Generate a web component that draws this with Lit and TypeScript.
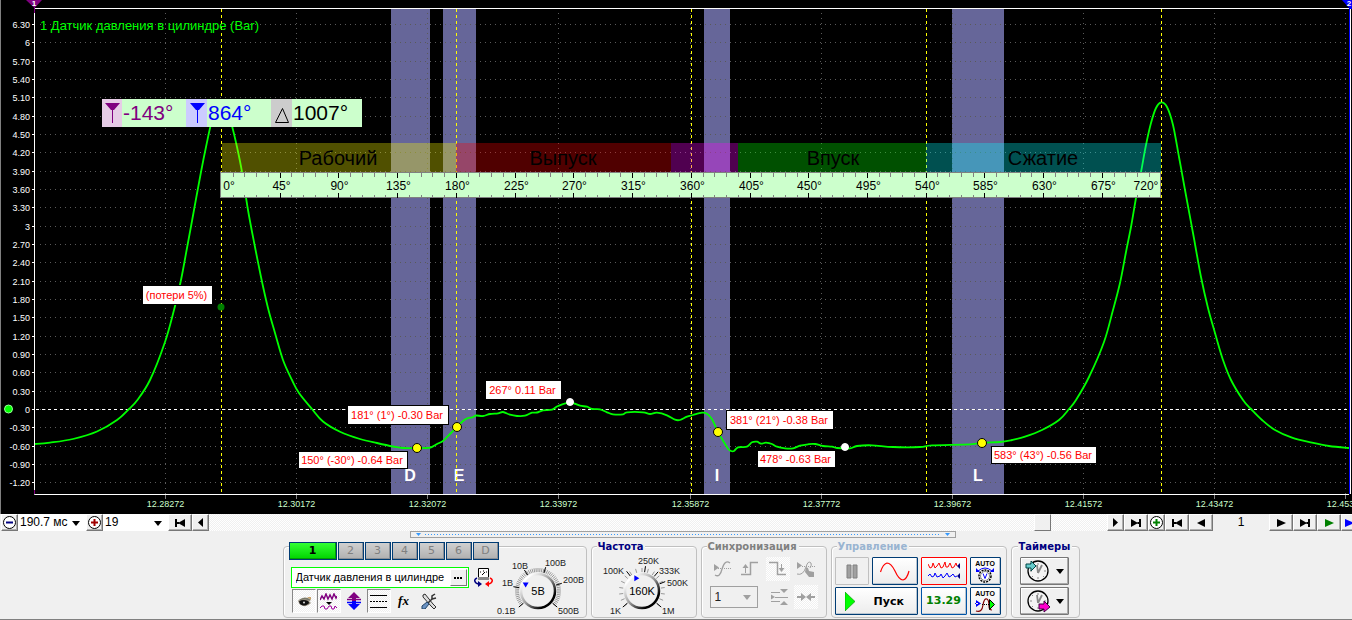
import { LitElement, html, svg, css } from "lit";
import { customElement, property, state } from "lit/decorators.js";
import { classMap } from "lit/directives/class-map.js";

type Pt = [number, number];

/* ---------- chart scales ---------- */
const ZERO_Y = 409;
const PX_PER_BAR = 61.1;
const DEG0_X = 221.5;
const PX_PER_DEG = 1.305;
const yOf = (bar: number) => Math.round(ZERO_Y - bar * PX_PER_BAR) + 0.5;
const xOf = (deg: number) => Math.round(DEG0_X + deg * PX_PER_DEG - 0.5) + 0.5;

const CURVE: Pt[] = [
  [35, 444], [50, 442.6], [73, 439], [97, 431.5], [117, 420], [129, 409], [137, 400.5], [150, 380],
  [165, 342], [174, 310], [181, 280], [187, 248], [194, 210], [201, 172], [206, 147],
  [211, 124], [216, 108], [221, 102.5], [226, 108], [232, 126], [237, 147], [242, 172], [248, 210], [254, 242],
  [261, 277], [268, 308], [275, 333], [283, 360], [292, 380], [299, 393], [312, 409], [323, 421.5],
  [340, 431.7], [360, 439], [377, 443], [393, 446.5], [403, 448], [417, 448], [427, 448], [431, 447.3], [437, 444],
  [443, 441], [450, 434], [457, 427], [463, 421], [468, 418], [472, 417.5], [476, 415.5], [483, 416],
  [490, 414], [498, 413.3], [503, 412], [510, 414.7], [517, 416], [525, 415.7], [532, 412.7],
  [537, 412.5], [543, 410.3], [552, 409.7], [558, 406], [570, 402.5], [580, 405.7], [587, 406.7],
  [592, 409], [600, 409.3], [607, 412.3], [613, 414.3], [623, 414.3], [627, 412.3], [643, 412.3],
  [650, 414], [657, 412.7], [667, 415.3], [675, 419.7], [680, 420], [687, 416.7], [693, 415],
  [702, 412.7], [707, 413.7], [712, 419.3], [718, 431.7], [723, 440.7], [728, 448.7], [731, 451],
  [734, 451], [738, 447.3], [747, 446.7], [752, 442.3], [757, 441.7], [761, 443.7], [766, 442.7],
  [772, 444], [777, 446.7], [785, 448.3], [793, 448.3], [800, 445.7], [808, 444.3], [815, 444],
  [823, 446], [832, 446.7], [837, 448], [850, 448.3], [857, 446], [872, 445.3], [893, 447],
  [920, 447], [932, 445.3], [970, 444.3], [982, 442.7], [1000, 442], [1012, 440], [1025, 436.7],
  [1042, 430], [1059, 420], [1069, 409], [1076, 400], [1089, 377], [1104, 342], [1113, 310],
  [1120, 283], [1126, 252], [1131, 227], [1136, 198], [1141, 172], [1146, 145], [1151, 123],
  [1156, 108], [1161, 102.5], [1167, 107], [1173, 125], [1179, 157], [1185, 190], [1193, 233],
  [1201, 277], [1208, 308], [1215, 333], [1223, 360], [1231, 380], [1243, 400], [1251, 409],
  [1262, 420], [1275, 430], [1292, 437.7], [1312, 442.7], [1329, 446], [1349, 448],
];

/* Smooth path through the samples (Catmull-Rom to Bezier). */
function smooth(p: Pt[]): string {
  let d = `M${p[0][0]} ${p[0][1]}`;
  for (let i = 0; i < p.length - 1; i++) {
    const a = p[Math.max(0, i - 1)], b = p[i], c = p[i + 1], e = p[Math.min(p.length - 1, i + 2)];
    const f = (n: number) => n.toFixed(1);
    d += `C${f(b[0] + (c[0] - a[0]) / 6)} ${f(b[1] + (c[1] - a[1]) / 6)} ${f(c[0] - (e[0] - b[0]) / 6)} ${f(c[1] - (e[1] - b[1]) / 6)} ${c[0]} ${c[1]}`;
  }
  return d;
}

const Y_TICKS = Array.from({ length: 26 }, (_, i) => (63 - i * 3) / 10);
const yLabel = (v: number) => (Number.isInteger(v) ? String(v) : v.toFixed(2));
const X_TICKS = ["12.28272", "12.30172", "12.32072", "12.33972", "12.35872", "12.37772", "12.39672", "12.41572", "12.43472", "12.45372"]
  .map((label, i) => ({ label, x: Math.round(165.15 + i * 131.1) + 0.5 }));

const BANDS = [
  { x: 391, w: 39, name: "D", tx: 410 },
  { x: 443, w: 33, name: "E", tx: 459 },
  { x: 704, w: 26, name: "I", tx: 717 },
  { x: 952, w: 52, name: "L", tx: 978 },
];
const PHASES = [
  { x: 222, w: 234, fill: "#ff0", name: "Рабочий", tx: 338 },
  { x: 456, w: 215, fill: "#f00", name: "Выпуск", tx: 563 },
  { x: 671, w: 67, fill: "#f0f", name: "", tx: 0 },
  { x: 738, w: 188, fill: "#0f0", name: "Впуск", tx: 833 },
  { x: 926, w: 235, fill: "#0ff", name: "Сжатие", tx: 1043 },
];
const NOTES = [
  { x: 143, y: 286, w: 69, h: 18, t: "(потери 5%)" },
  { x: 348, y: 406, w: 100, h: 18, t: "181° (1°) -0.30 Bar" },
  { x: 299, y: 452, w: 108, h: 16, t: "150° (-30°) -0.64 Bar" },
  { x: 486, y: 381, w: 75, h: 18, t: "267° 0.11 Bar" },
  { x: 727, y: 411, w: 106, h: 18, t: "381° (21°) -0.38 Bar" },
  { x: 758, y: 451, w: 77, h: 16, t: "478° -0.63 Bar" },
  { x: 992, y: 447, w: 104, h: 16, t: "583° (43°) -0.56 Bar" },
];
const POINTS = [
  { x: 417, y: 448, c: "yellow" }, { x: 457, y: 427, c: "yellow" }, { x: 718, y: 432, c: "yellow" },
  { x: 982, y: 443, c: "yellow" }, { x: 570, y: 402, c: "white" }, { x: 845, y: 447, c: "white" },
];

@customElement("pressure-chart")
export class PressureChart extends LitElement {
  static styles = css`
    :host { display: block; background: #000; }
    svg { display: block; width: 100%; height: auto; font-family: "Liberation Sans", Arial, sans-serif; }
    .grid { stroke: #5a5a5a; stroke-width: 1; }
    .gh { stroke-dasharray: 1 4; }
    .gv { stroke-dasharray: 1 4; }
    .axis { fill: none; stroke: #fff; stroke-width: 1; }
    .ylab { fill: #fff; font-size: 9px; text-anchor: end; }
    .xlab { fill: #cfc; font-size: 9px; text-anchor: middle; }
    .band { fill: #669; }
    .mark { stroke: #ff0; stroke-dasharray: 3 3; }
    .zero { stroke: #fff; stroke-dasharray: 3 3; }
    .curve { fill: none; stroke: #0f0; stroke-width: 1.8; }
    .channel { fill: #0f0; font-size: 13px; }
    .phase { fill-opacity: 0.314; }
    .phase-name { font-size: 20px; text-anchor: middle; }
    .ruler { fill: #cfc; stroke: #808080; }
    .minor { stroke: #808080; }
    .major { stroke: #000; }
    .deg { font-size: 12px; text-anchor: middle; }
    .note { fill: #fff; stroke: #000; }
    .note-text { fill: #f00; font-size: 11px; text-anchor: middle; }
    .band-name { fill: #fff; font-size: 16px; font-weight: bold; text-anchor: middle; }
    .yellow { fill: #ff0; stroke: #000; }
    .white { fill: #fff; stroke: #fff; }
    .read { font-size: 21px; }
    .flag { fill: #fff; font-size: 8px; font-weight: bold; text-anchor: middle; }
  `;

  render() {
    const ruler = Array.from({ length: 79 }, (_, i) => (i + 1) * 9);
    return html`<svg viewBox="0 0 1352 514" role="img" aria-label="Датчик давления в цилиндре">
      <rect width="1352" height="514" fill="#000"></rect>
      <path d="M.5 0V514" stroke="#808080"></path>
      ${BANDS.map((b) => svg`<rect class="band" x=${b.x} y="9" width=${b.w} height="485"></rect>`)}
      ${Y_TICKS.map((v) => svg`<path class="grid gh" d="M40 ${yOf(v)}H1349"></path><path class="axis" d="M32 ${yOf(v)}h3"></path>
        <text class="ylab" x="30" y=${yOf(v) + 3}>${yLabel(v)}</text>`)}
      ${X_TICKS.map((t) => svg`<path class="grid gv" d="M${t.x} 13V494"></path><path d="M${t.x} 495v4" stroke="#808080"></path>
        <text class="xlab" x=${t.x} y="507">${t.label}</text>`)}
      <path class="zero" d="M36 ${yOf(0)}H1349"></path>
      <path class="curve" d=${smooth(CURVE)}></path>
      ${[0, 180, 360, 540, 720].map((d) => svg`<path class="mark" d="M${xOf(d)} 9V494"></path>`)}
      ${PHASES.map((p) => svg`<rect class="phase" x=${p.x} y="143" width=${p.w} height="29" fill=${p.fill}></rect>
        ${p.name ? svg`<text class="phase-name" x=${p.tx} y="165">${p.name}</text>` : ""}`)}
      <rect class="ruler" x="220.5" y="172.5" width="940" height="25"></rect>
      ${ruler.map((d) => d % 45
        ? svg`<path class="minor" d="M${xOf(d)} 173v4M${xOf(d)} 195v2"></path>`
        : svg`<path class="major" d="M${xOf(d)} 173v5M${xOf(d)} 193v5"></path>
          <text class="deg" x=${xOf(d) + 1} y="190">${d}°</text>`)}
      <text class="deg" x="229" y="190">0°</text>
      <text class="deg" x="1146" y="190">720°</text>
      <path class="axis" d="M34.5 13V494.5H1349M34 8.5H1350M1350.5 8V494"></path>
      <path d="M1349.5 8V494" stroke="#00f"></path>
      <path d="M34.5 6V13M34.5 490V494" stroke="#800080"></path>
      <path d="M26 0H42L35 7.500H34Z" fill="#800080"></path>
      <text class="flag" x="34" y="6">1</text>
      <path d="M1342 0H1352V9H1350Z" fill="#00f"></path>
      <text class="flag" x="1349" y="6">2</text>
      <text class="channel" x="40" y="30">1 Датчик давления в цилиндре (Bar)</text>

      <rect x="102" y="99" width="260" height="28" fill="#cfc"></rect>
      <rect x="102" y="99" width="20" height="28" fill="#e6cce6"></rect>
      <rect x="186" y="99" width="21" height="28" fill="#ccf"></rect>
      <rect x="271" y="99" width="21" height="28" fill="#ccc"></rect>
      <path d="M105 103h15l-6 7h-3zM112 108h1v15h-1z" fill="#800080"></path>
      <path d="M190 103h15l-6 7h-3zM197 108h1v15h-1z" fill="#00f"></path>
      <path d="M282.500 108.500L288.500 122.500H275.500Z" fill="none" stroke="#000"></path>
      <text class="read" x="123" y="120" fill="#800080">-143°</text>
      <text class="read" x="208" y="120" fill="#00f">864°</text>
      <text class="read" x="293" y="120">1007°</text>

      ${NOTES.map((n) => svg`<rect class="note" x=${n.x - 0.5} y=${n.y - 0.5} width=${n.w + 1} height=${n.h + 1}></rect>
        <text class="note-text" x=${n.x + n.w / 2 - 1} y=${n.y + n.h / 2 + 4}>${n.t}</text>`)}
      ${BANDS.map((b) => svg`<text class="band-name" x=${b.tx} y="481">${b.name}</text>`)}
      <path class="mark" d="M${xOf(180)} 465V494"></path>
      ${POINTS.map((p) => svg`<circle class=${p.c} cx=${p.x} cy=${p.y} r=${p.c === "white" ? 3.5 : 4.5}></circle>`)}
      <circle cx="221" cy="307" r="3.500" fill="#008000"></circle>
      <circle cx="8.500" cy="409" r="4" fill="#0f0" stroke="#9f9"></circle>
    </svg>`;
  }
}

/* ---------- rotary dial ---------- */
interface DialLabel { t: string; x: number; y: number; a: number }

@customElement("rotary-dial")
export class RotaryDial extends LitElement {
  @property() value = "";
  @property({ type: Number }) w = 90;
  @property({ type: Number }) cx = 42;
  @property({ type: Number }) steps = 50;
  @property({ type: Number }) pointer = 0;
  @property({ attribute: false }) labels: DialLabel[] = [];

  static styles = css`
    :host { display: block; }
    svg { display: block; font-family: "Liberation Sans", Arial, sans-serif; }
    .lab { font-size: 9px; fill: #222; }
    .val { font-size: 11px; text-anchor: middle; }
  `;

  render() {
    const cy = 38;
    const ray = (a: number, r1: number, r2: number) => {
      const r = (a * Math.PI) / 180;
      const c = Math.cos(r), s = Math.sin(r);
      return `M${(this.cx + c * r1).toFixed(1)} ${(cy + s * r1).toFixed(1)}L${(this.cx + c * r2).toFixed(1)} ${(cy + s * r2).toFixed(1)}`;
    };
    const minor = Array.from({ length: this.steps + 1 }, (_, i) => ray(-220 + (i * 260) / this.steps, 19, 23)).join("");
    const p = (this.pointer * Math.PI) / 180;
    const px = this.cx + Math.cos(p) * 14, py = cy + Math.sin(p) * 14;
    return html`<svg width=${this.w} height="64" viewBox="0 0 ${this.w} 64" role="img" aria-label=${this.value}>
      <defs><linearGradient id="rim" x1="0" y1="0" x2="1" y2="1">
        <stop offset="0.15" stop-color="#fff"></stop><stop offset="0.5" stop-color="#999"></stop><stop offset="0.8" stop-color="#000"></stop>
      </linearGradient></defs>
      <path d=${minor} stroke="#999"></path>
      <path d=${this.labels.map((l) => ray(l.a, 19, 25)).join("")} stroke="#000"></path>
      <circle cx=${this.cx} cy=${cy} r="17" fill="#f0f0f0" stroke="url(#rim)" stroke-width="2.500"></circle>
      ${this.steps > 30
        ? svg`<path d="M${px - 3} ${py - 2}h6l-3 5z" fill="#00f"></path>`
        : svg`<path d="M${px - 2} ${py - 3}v6l5-3z" fill="#00f"></path>`}
      <text class="val" x=${this.cx} y=${cy + 4}>${this.value}</text>
      ${this.labels.map((l) => svg`<text class="lab" x=${l.x} y=${l.y}>${l.t}</text>`)}
    </svg>`;
  }
}

/* ---------- glyphs ---------- */
const glyph = (body: unknown, w = 16, h = 16) =>
  html`<svg class="glyph" width=${w} height=${h} viewBox="0 0 ${w} ${h}" aria-hidden="true">${body}</svg>`;

const arrows = {
  prev: svg`<path d="M9 2v9L4 6.500z"></path>`,
  next: svg`<path d="M4 2v9l5-4.500z"></path>`,
  first: svg`<path d="M1 3h2v8H1zM11 3v8L4 7zM3 6h2v2H3z"></path>`,
  last: svg`<path d="M9 3h2v8H9zM1 3v8l7-4zM7 6h2v2H7z"></path>`,
  play: svg`<path d="M2 3v8l9-4z"></path>`,
  back: svg`<path d="M10 3v8L2 7z"></path>`,
};
const down = (c: string) => html`<svg class="down" width="8" height="5" viewBox="0 0 8 5" aria-hidden="true"><path d="M0 0h8L4 5z" fill=${c}></path></svg>`;

const g = {
  minus: svg`<circle cx="7.500" cy="7.500" r="6" fill="#fff" stroke="#000"></circle><path d="M4 6.500h7v2H4z" fill="#000080"></path>`,
  plus: (c: string) => svg`<circle cx="7.500" cy="7.500" r="6" fill="#fff" stroke="#000"></circle><path d="M4 6.500h7v2H4zM6.500 4h2v7h-2z" fill=${c}></path>`,
  eye: svg`<path d="M2 8Q4 5 9 4.500Q13 4.500 15 7L13 8Q10 6 7 7z" fill="#7a7a6a"></path><path d="M2 8Q7 5 12 7Q14 9 15 10Q10 15 5 12Q3 11 2 8z" fill="#999080"></path><path d="M3 8.500Q7 6 12 8Q14 10 12 11Q8 14 4 11z" fill="#111"></path><circle cx="8" cy="9.500" r="1" fill="#ddd"></circle><path d="M11 4h4v3z" fill="#c9a36b"></path>`,
  waves: svg`<path d="M0 7L2 3L4 6L6 1L8 6L10 2L12 6L14 1L16 5L17 3" fill="none" stroke="#800080" stroke-width="1.500"></path><path d="M6 9h6l-3 3z" fill="#000"></path><path d="M0 15L2 13L4 13L5 16L7 16L9 13L11 13L12 16L14 16L15 13L17 15" fill="none" stroke="#a000a0"></path>`,
  updown: svg`<path d="M8 0l6 6h-4v4H6V6H2z" fill="#800080"></path><path d="M8 18l6-6h-4V9H6v3H2z" fill="#00f"></path><path d="M1 7.500h14" stroke="#800080" stroke-width="1.500"></path><path d="M1 10.500h14" stroke="#00f" stroke-width="1.500"></path>`,
  lines: svg`<path d="M0 1.500h17M0 13.500h17" stroke="#000"></path><path d="M0 7.500h17" stroke="#000" stroke-dasharray="2 1"></path>`,
  tools: svg`<path d="M2 2l2-1l8 10l3 3l-2 2l-3-3L2 4z" fill="#ddd" stroke="#000" stroke-width=".8"></path><path d="M14 1l-3 2v3l-6 6" stroke="#333" stroke-width="1.500" fill="none"></path><path d="M15 5l-4 1" stroke="#333" stroke-width="1.500"></path><path d="M6 9l2 2l-4 5H1v-3z" fill="#6b93c4" stroke="#246"></path>`,
  device: svg`<path d="M4.500 .5h10v11h-10z" fill="#fff" stroke="#000"></path><path d="M4 9h11v3H4z" fill="#888"></path><path d="M6 4h1M9 3h1M12 4h1M8 7l3-3" stroke="#000"></path><path d="M3 10Q-1 12 2 15l2 1" fill="none" stroke="#000080" stroke-width="1.500"></path><path d="M4 13l4 3l-4 3z" fill="#000080"></path><path d="M16 10Q20 12 17 15l-2 1" fill="none" stroke="#f00" stroke-width="1.500"></path><path d="M15 13l-4 3l4 3z" fill="#f00"></path>`,
  syncWave: svg`<path d="M1 4v7l5-3.500z" fill="#a0a0a0"></path><path d="M5 8.500h13" stroke="#a0a0a0" stroke-dasharray="1 1"></path><path d="M2 15Q7 18 9 9Q12-1 17 3" fill="none" stroke="#a0a0a0" stroke-width="1.300"></path>`,
  syncRise: svg`<path d="M0 14.500h9.500V2.500H17" fill="none" stroke="#a0a0a0" stroke-width="1.500"></path><path d="M4.500 13V6" stroke="#a0a0a0"></path><path d="M1.500 8h6l-3-4z" fill="#a0a0a0"></path>`,
  syncFall: svg`<path d="M0 2.500h8.500v12H17" fill="none" stroke="#a0a0a0" stroke-width="1.500"></path><path d="M12.500 4V11" stroke="#a0a0a0"></path><path d="M9.500 8h6l-3 4z" fill="#a0a0a0"></path>`,
  syncHand: svg`<path d="M0 2v7l5-3.500z" fill="#a0a0a0"></path><path d="M5 6.500h14" stroke="#a0a0a0" stroke-dasharray="1 1"></path><path d="M0 14Q6 16 9 7Q11 0 14 3Q15 5 13 8" fill="none" stroke="#a0a0a0"></path><path d="M9 7l2 1l1 3l5 1v5h-5l-4-5z" fill="#a0a0a0"></path>`,
  spread: svg`<path d="M10 0h8l-4 4zM10 16h8l-4-4z" fill="#a0a0a0"></path><path d="M1 3.500h9M1 12.500h9M5 8.500h13" stroke="#a0a0a0"></path><path d="M1 5.500v5l4-2.500z" fill="#a0a0a0"></path>`,
  squeeze: svg`<path d="M0 7h4V4l5 4l-5 4V9H0zM18 7h-4V4l-5 4l5 4V9h4z" fill="#a0a0a0"></path>`,
  pause: svg`<path d="M1 1h4v13H1zM7 1h4v13H7z" fill="#a0a0a0" stroke="#808080"></path>`,
  sine: svg`<path d="M.5 10Q3 2 7 1Q11 1 15 9Q19 18 23 18Q27 17 29 9" fill="none" stroke="#f00" stroke-width="1.200"></path>`,
  dual: svg`<path d="M0 3L2 7L4 6L5 2L7 7L9 5L11 2L13 7L15 6L17 1L18 6L20 6L22 2L24 7L26 6L28 2L29 5" fill="none" stroke="#f00"></path><path d="M0 15L2 13L4 16L6 15L7 12L9 16L12 15L13 13L15 17L17 15L19 12L21 16L23 15L25 13L27 16L29 15" fill="none" stroke="#00f"></path><path d="M29 5l3-3v6zM29 15l3-3v6z" fill="#000080"></path>`,
  autoDial: svg`<path d="M3 4Q10-2 17 4" fill="none" stroke="#00f"></path><path d="M1 1v4h4zM19 1v4h-4z" fill="#00f"></path><circle cx="10" cy="9" r="6" fill="#fff" stroke="#000" stroke-width="1.500" stroke-dasharray="2 1"></circle><circle cx="10" cy="9" r="4.500" fill="#fff" stroke="#666" stroke-width=".8"></circle><path d="M8 6.500l2 5l2-5" fill="none" stroke="#00f"></path>`,
  autoRun: svg`<path d="M1 3v7l5-3.500zM0 6h3v1H0z" fill="#00f"></path><path d="M1 14Q7 16 8 8Q9 1 12 2Q14 3 14 9Q14 13 17 13" fill="none" stroke="#800000" stroke-width="1.200"></path><path d="M7 7.500h8" stroke="#000" stroke-dasharray="1 1"></path><path d="M14.500 2.500v10l5-5z" fill="#0f0" stroke="#000"></path>`,
  clock: svg`<circle cx="13" cy="12" r="10" fill="#f4f4f4" stroke="#000" stroke-width="1.300"></circle><path d="M13 4v2M13 18v2M5 12h2M19 12h2M7 6l1 1M19 18l-1-1M7 18l1-1" stroke="#888"></path><path d="M13 14L17 6M13 14L12 6" stroke="#888" stroke-width="1.800" fill="none"></path>`,
};

/* ---------- page ---------- */
@customElement("app-root")
export class AppRoot extends LitElement {
  @state() private channel = "1";

  static styles = css`
    :host {
      display: block; min-height: 100vh; overflow: hidden; background: #f0f0f0; color: #000;
      font: 11px/13px "Liberation Sans", Arial, sans-serif;
    }
    * { box-sizing: border-box; }
    button, select, input { font: inherit; margin: 0; padding: 0; border-radius: 0; color: inherit; }
    .glyph { display: block; flex: none; }
    .down { flex: none; }

    .transport { display: flex; height: 17px; overflow: hidden; padding-left: 1px; }
    .tb {
      display: flex; flex: none; align-items: center; justify-content: center; width: 24px; height: 17px;
      background: #f0f0f0; border: 1px solid; border-color: #fff #777 #777 #fff; box-shadow: inset -1px -1px #b0b0b0;
    }
    .tb.small { width: 17px; }
    .tb.edge { margin-right: -6px; }
    .green { fill: #008000; }
    .blue { fill: #00f; }
    .combo { position: relative; display: block; flex: none; width: 68px; height: 17px; background: #fff; }
    .combo.scale { width: 65px; }
    .combo select {
      width: 100%; height: 100%; appearance: none; border: 0; background: transparent; padding: 0 2px; font-size: 12px; outline: 0;
    }
    .combo .down { position: absolute; right: 6px; top: 7px; pointer-events: none; }
    .scroll {
      flex: 1; min-width: 0; height: 17px; appearance: none; outline: 0;
      background: repeating-conic-gradient(#fff 0 25%, #f0f0f0 0 50%) 0 0 / 2px 2px;
    }
    .scroll::-webkit-slider-thumb {
      appearance: none; width: 17px; height: 17px; background: #f0f0f0; border: 1px solid; border-color: #fff #777 #777 #fff;
    }
    .page { flex: none; width: 56px; text-align: center; font-size: 12px; line-height: 17px; }

    .panel { display: flex; flex-direction: column; align-items: center; padding-left: 10px; border-bottom: 1px solid #808080; padding-bottom: 1px; }
    .splitter {
      display: flex; align-items: center; gap: 4px; width: 546px; height: 7px; margin-left: 4px; padding: 0 5px; background: #f0f0f0; border: 1px solid #a0a0a0;
    }
    .dots { flex: 1; height: 1px; background: repeating-linear-gradient(90deg, #3399ff 0 1px, transparent 1px 3px); }
    .groups { display: flex; gap: 4px; margin-top: 8px; }
    .group { height: 72px; border: 1px solid #c0c0c0; border-radius: 4px; box-shadow: inset 1px 1px #fff; }
    .title {
      width: max-content; height: 12px; margin: -6px 0 4px 5px; padding: 0 2px 0 1px; background: #f0f0f0; color: #000080;
      font: bold 10px/12px "DejaVu Sans", Verdana, sans-serif; position: relative;
    }
    .title.gray { color: #808080; }
    .title.pale { color: #99b4d1; }

    .channels { display: grid; grid-template-columns: 1fr 90px; width: 304px; }
    .left { min-width: 0; }
    .tabs { display: flex; gap: 1px; width: max-content; margin: -5px 0 7px 5px; background: #f0f0f0; position: relative; }
    .tab {
      width: 26px; height: 18px; border: 1px solid #003c74; background: linear-gradient(#d0d0d0, #b0b0b0); color: #808080;
      font: 11px/14px "DejaVu Sans", Verdana, sans-serif; box-shadow: inset -1px -1px #8a8f96;
    }
    .tab.on { width: 48px; background: linear-gradient(#3f3, #00d400); color: #000; font-weight: bold; box-shadow: inset -1px -1px #00a000; }
    .field { display: flex; align-items: center; gap: 5px; margin-left: 7px; }
    .box { display: flex; width: 178px; height: 21px; border: 1px solid #0f0; background: #fff; padding: 1px; }
    .box input { flex: 1; min-width: 0; border: 0; outline: 0; padding-left: 3px; background: transparent; }
    .more {
      display: flex; align-items: center; justify-content: center; width: 17px; background: #f0f0f0;
      border: 1px solid; border-color: #fff #777 #777 #fff;
    }
    .tools { display: flex; gap: 1px; margin: 1px 0 0 8px; }
    .tool, .sync {
      display: flex; align-items: center; justify-content: center; width: 24px; height: 24px; background: none; border: 0;
    }
    .tool.down-state { border: 1px solid; border-color: #888 #fff #fff #888; }
    .down-state { background: repeating-conic-gradient(#fff 0 25%, #f0f0f0 0 50%) 0 0 / 2px 2px; }
    .tool.fx { font: italic bold 13px/14px "Liberation Serif", serif; }
    .plain { background: none; border: 0; }
    .knob { padding-top: 6px; }

    .freq { width: 106px; }
    .freq .title { margin-bottom: 0; }
    .syncs { width: 126px; }
    .row { display: flex; align-items: center; }
    .sync-row { gap: 4px; margin: 2px 0 0 8px; }
    .sync-row.second { gap: 3px; margin-top: 4px; }
    .num { position: relative; width: 48px; height: 22px; margin-right: 6px; border: 1px solid #a0a0a0; }
    .num select { width: 100%; height: 100%; appearance: none; border: 0; background: transparent; padding-left: 4px; font-size: 12px; color: #222; }
    .num .down { position: absolute; right: 6px; top: 8px; pointer-events: none; }

    .control { width: 176px; }
    .buttons { display: grid; grid-template-columns: 34px 46px 46px 31px; gap: 2px 3px; margin-left: 3px; }
    .big {
      display: flex; align-items: center; justify-content: center; height: 28px; border: 1px solid #003c74; border-radius: 1px;
      background: linear-gradient(#fff, #ececec); box-shadow: inset -1px -1px #b8c4d0;
    }
    .big.off { border-color: #c0c0c0; background: #f0f0f0; box-shadow: none; }
    .big.red { border-color: #f00; box-shadow: none; }
    .start { grid-column: span 2; justify-content: flex-start; gap: 18px; padding-left: 9px; font: bold 11px/13px "DejaVu Sans", sans-serif; }
    .volt { border-color: #0054a6; color: #008000; font: bold 11px/14px "DejaVu Sans", sans-serif; }
    .auto { flex-direction: column; font: bold 7px/7px "Liberation Sans", sans-serif; }
    .timers { width: 69px; }
    .timer-list { display: grid; gap: 2px; margin-left: 8px; width: 49px; }
    .timer { gap: 5px; border-color: #777; box-shadow: inset -1px -1px #aaa, inset 1px 1px #fff; background: #f0f0f0; }
    .timers .title { margin-left: 6px; }
  `;

  private nav(label: string, body: unknown, cls = "") {
    return html`<button class="tb ${cls}" aria-label=${label}>${glyph(body, 13, 13)}</button>`;
  }

  render() {
    const volts = [
      { t: "0.1В", x: 1, y: 61, a: 140 }, { t: "1В", x: 6, y: 33, a: 190 }, { t: "10В", x: 16, y: 16, a: 237 },
      { t: "100В", x: 49, y: 13, a: 288 }, { t: "200В", x: 67, y: 30, a: 342 }, { t: "500В", x: 62, y: 61, a: 40 },
    ];
    const freqs = [
      { t: "1K", x: 18, y: 61, a: 140 }, { t: "100K", x: 11, y: 21, a: 232 }, { t: "250K", x: 46, y: 11, a: 278 },
      { t: "333K", x: 67, y: 21, a: 310 }, { t: "500K", x: 75, y: 33, a: 338 }, { t: "1M", x: 70, y: 61, a: 40 },
    ];
    return html`
      <pressure-chart></pressure-chart>

      <div class="transport">
        <button class="tb small" aria-label="Уменьшить">${glyph(g.minus, 15, 15)}</button>
        <label class="combo"><select aria-label="Длительность"><option>190.7 мс</option></select>${down("#000")}</label>
        <button class="tb small" aria-label="Увеличить">${glyph(g.plus("#a00000"), 15, 15)}</button>
        <label class="combo scale"><select aria-label="Масштаб"><option>19</option></select>${down("#000")}</label>
        ${this.nav("В начало", arrows.first)}
        ${this.nav("Влево", arrows.prev, "small")}
        <input class="scroll" type="range" min="0" max="1000" value="936" aria-label="Прокрутка" />
        ${this.nav("Вправо", arrows.next, "small")}
        ${this.nav("В конец", arrows.last)}
        <button class="tb small" aria-label="Добавить">${glyph(g.plus("#008000"), 15, 15)}</button>
        ${this.nav("Первая", arrows.first)}
        ${this.nav("Предыдущая", arrows.back)}
        <span class="page">1</span>
        ${this.nav("Следующая", arrows.play)}
        ${this.nav("Последняя", arrows.last)}
        ${this.nav("Воспроизвести", arrows.play, "green")}
        ${this.nav("Далее", arrows.play, "small edge blue")}
      </div>

      <div class="panel">
        <div class="splitter">
          <svg width="5" height="3" viewBox="0 0 5 3"><path d="M0 0h5L2.500 3z" fill="#3399ff"></path></svg>
          <span class="dots"></span>
          <svg width="5" height="3" viewBox="0 0 5 3"><path d="M0 0h5L2.500 3z" fill="#3399ff"></path></svg>
        </div>

        <div class="groups">
          <section class="group channels">
            <div class="left">
              <div class="tabs">
                ${["1", "2", "3", "4", "5", "6", "D"].map((c) => html`<button
                  class=${classMap({ tab: true, on: c === this.channel })} @click=${() => (this.channel = c)}>${c}</button>`)}
              </div>
              <div class="field">
                <div class="box">
                  <input type="text" aria-label="Название канала" .value=${"Датчик давления в цилиндре"} />
                  <button class="more" aria-label="Выбрать">${glyph(svg`<path d="M0 0h2v2H0zM3 0h2v2H3zM6 0h2v2H6z"></path>`, 8, 2)}</button>
                </div>
                <button class="plain" aria-label="Устройство">${glyph(g.device, 19, 19)}</button>
              </div>
              <div class="tools">
                <button class="tool down-state" aria-label="Показать">${glyph(g.eye)}</button>
                <button class="tool down-state" aria-label="Фильтр">${glyph(g.waves, 17, 17)}</button>
                <button class="tool" aria-label="Инверсия">${glyph(g.updown, 16, 18)}</button>
                <button class="tool down-state" aria-label="Линии">${glyph(g.lines, 17, 15)}</button>
                <button class="tool fx" aria-label="Функция">fx</button>
                <button class="tool" aria-label="Настройки">${glyph(g.tools)}</button>
              </div>
            </div>
            <div class="knob">
              <rotary-dial value="5В" w="90" cx="42" steps="52" pointer="208" .labels=${volts}></rotary-dial>
            </div>
          </section>

          <section class="group freq">
            <h2 class="title">Частота</h2>
            <rotary-dial value="160K" w="104" cx="50" steps="16" pointer="246" .labels=${freqs}></rotary-dial>
          </section>

          <section class="group syncs">
            <h2 class="title gray">Синхронизация</h2>
            <div class="row sync-row">
              <button class="sync" aria-label="Авто">${glyph(g.syncWave, 18, 18)}</button>
              <button class="sync" aria-label="Фронт">${glyph(g.syncRise, 18, 18)}</button>
              <button class="sync down-state" aria-label="Спад">${glyph(g.syncFall, 18, 18)}</button>
              <button class="sync" aria-label="Вручную">${glyph(g.syncHand, 18, 18)}</button>
            </div>
            <div class="row sync-row second">
              <label class="num"><select aria-label="Канал"><option>1</option></select>${down("#a0a0a0")}</label>
              <button class="sync" aria-label="Шире">${glyph(g.spread, 18, 16)}</button>
              <button class="sync down-state" aria-label="Уже">${glyph(g.squeeze, 18, 16)}</button>
            </div>
          </section>

          <section class="group control">
            <h2 class="title pale">Управление</h2>
            <div class="buttons">
              <button class="big off" aria-label="Пауза">${glyph(g.pause, 12, 15)}</button>
              <button class="big" aria-label="Сигнал">${glyph(g.sine, 30, 19)}</button>
              <button class="big red" aria-label="Каналы">${glyph(g.dual, 32, 20)}</button>
              <button class="big auto">AUTO${glyph(g.autoDial, 20, 16)}</button>
              <button class="big start">${glyph(svg`<path d="M0 0v19l10-9.500z" fill="#0f0" stroke="#080" stroke-width=".6"></path>`, 11, 19)}Пуск</button>
              <button class="big volt">13.29</button>
              <button class="big auto">AUTO${glyph(g.autoRun, 20, 16)}</button>
            </div>
          </section>

          <section class="group timers">
            <h2 class="title">Таймеры</h2>
            <div class="timer-list">
              <button class="big timer" aria-label="Таймер старта">${glyph(svg`${g.clock}<path d="M1 5h5V2l5 5l-5 5V9H1z" fill="#6cc" stroke="#044"></path>`, 26, 24)}${down("#000")}</button>
              <button class="big timer" aria-label="Таймер остановки">${glyph(svg`${g.clock}<path d="M14 15h5v-3l6 6l-6 5v-3h-5z" fill="#f0c" stroke="#404"></path>`, 26, 24)}${down("#000")}</button>
            </div>
          </section>
        </div>
      </div>
    `;
  }
}
